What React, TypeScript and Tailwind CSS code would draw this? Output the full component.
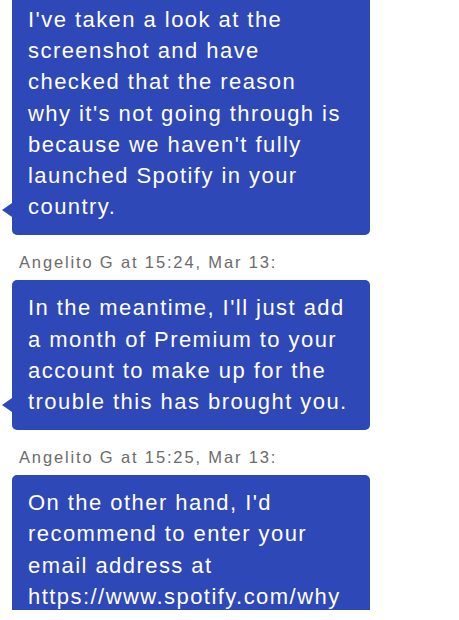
const messages = [
  {
    label: null,
    lines: [
      "I've taken a look at the",
      "screenshot and have",
      "checked that the reason",
      "why it's not going through is",
      "because we haven't fully",
      "launched Spotify in your",
      "country.",
    ],
    tail: true,
  },
  {
    label: "Angelito G at 15:24, Mar 13:",
    lines: [
      "In the meantime, I'll just add",
      "a month of Premium to your",
      "account to make up for the",
      "trouble this has brought you.",
    ],
    tail: true,
  },
  {
    label: "Angelito G at 15:25, Mar 13:",
    lines: [
      "On the other hand, I'd",
      "recommend to enter your",
      "email address at",
      "https://www.spotify.com/why",
    ],
    tail: false,
  },
]

function Bubble({ lines, tail }: { lines: string[]; tail: boolean }) {
  return (
    <div className="relative ml-[12px] w-[358px]">
      <div className="rounded-[5px] bg-[#2f48b7] pl-[16px] pr-[8px] pt-[12px] pb-[13px] text-[22px] leading-[31.2px] tracking-[1.45px] text-white">
        {lines.map((l, i) => (
          <div key={i} className="whitespace-nowrap">
            {l}
          </div>
        ))}
      </div>
      {tail && (
        <div className="absolute left-[-10px] bottom-[18px] h-0 w-0 border-y-[7px] border-r-[10px] border-y-transparent border-r-[#2f48b7]" />
      )}
    </div>
  )
}

export default function App() {
  return (
    <div className="h-[620px] w-[459px] overflow-hidden bg-white" style={{ fontFamily: '"Liberation Sans", Arial, sans-serif' }}>
      <div className="h-[610px] overflow-hidden">
        <div className="mt-[-8px]">
          {messages.map((m, i) => (
            <div key={i}>
              {m.label && (
                <div className="pl-[19px] pt-[17px] pb-[8px] text-[16.5px] leading-[20px] tracking-[1.85px] text-[#6b6b6b]">
                  {m.label}
                </div>
              )}
              <Bubble lines={m.lines} tail={m.tail} />
            </div>
          ))}
        </div>
      </div>
    </div>
  )
}
